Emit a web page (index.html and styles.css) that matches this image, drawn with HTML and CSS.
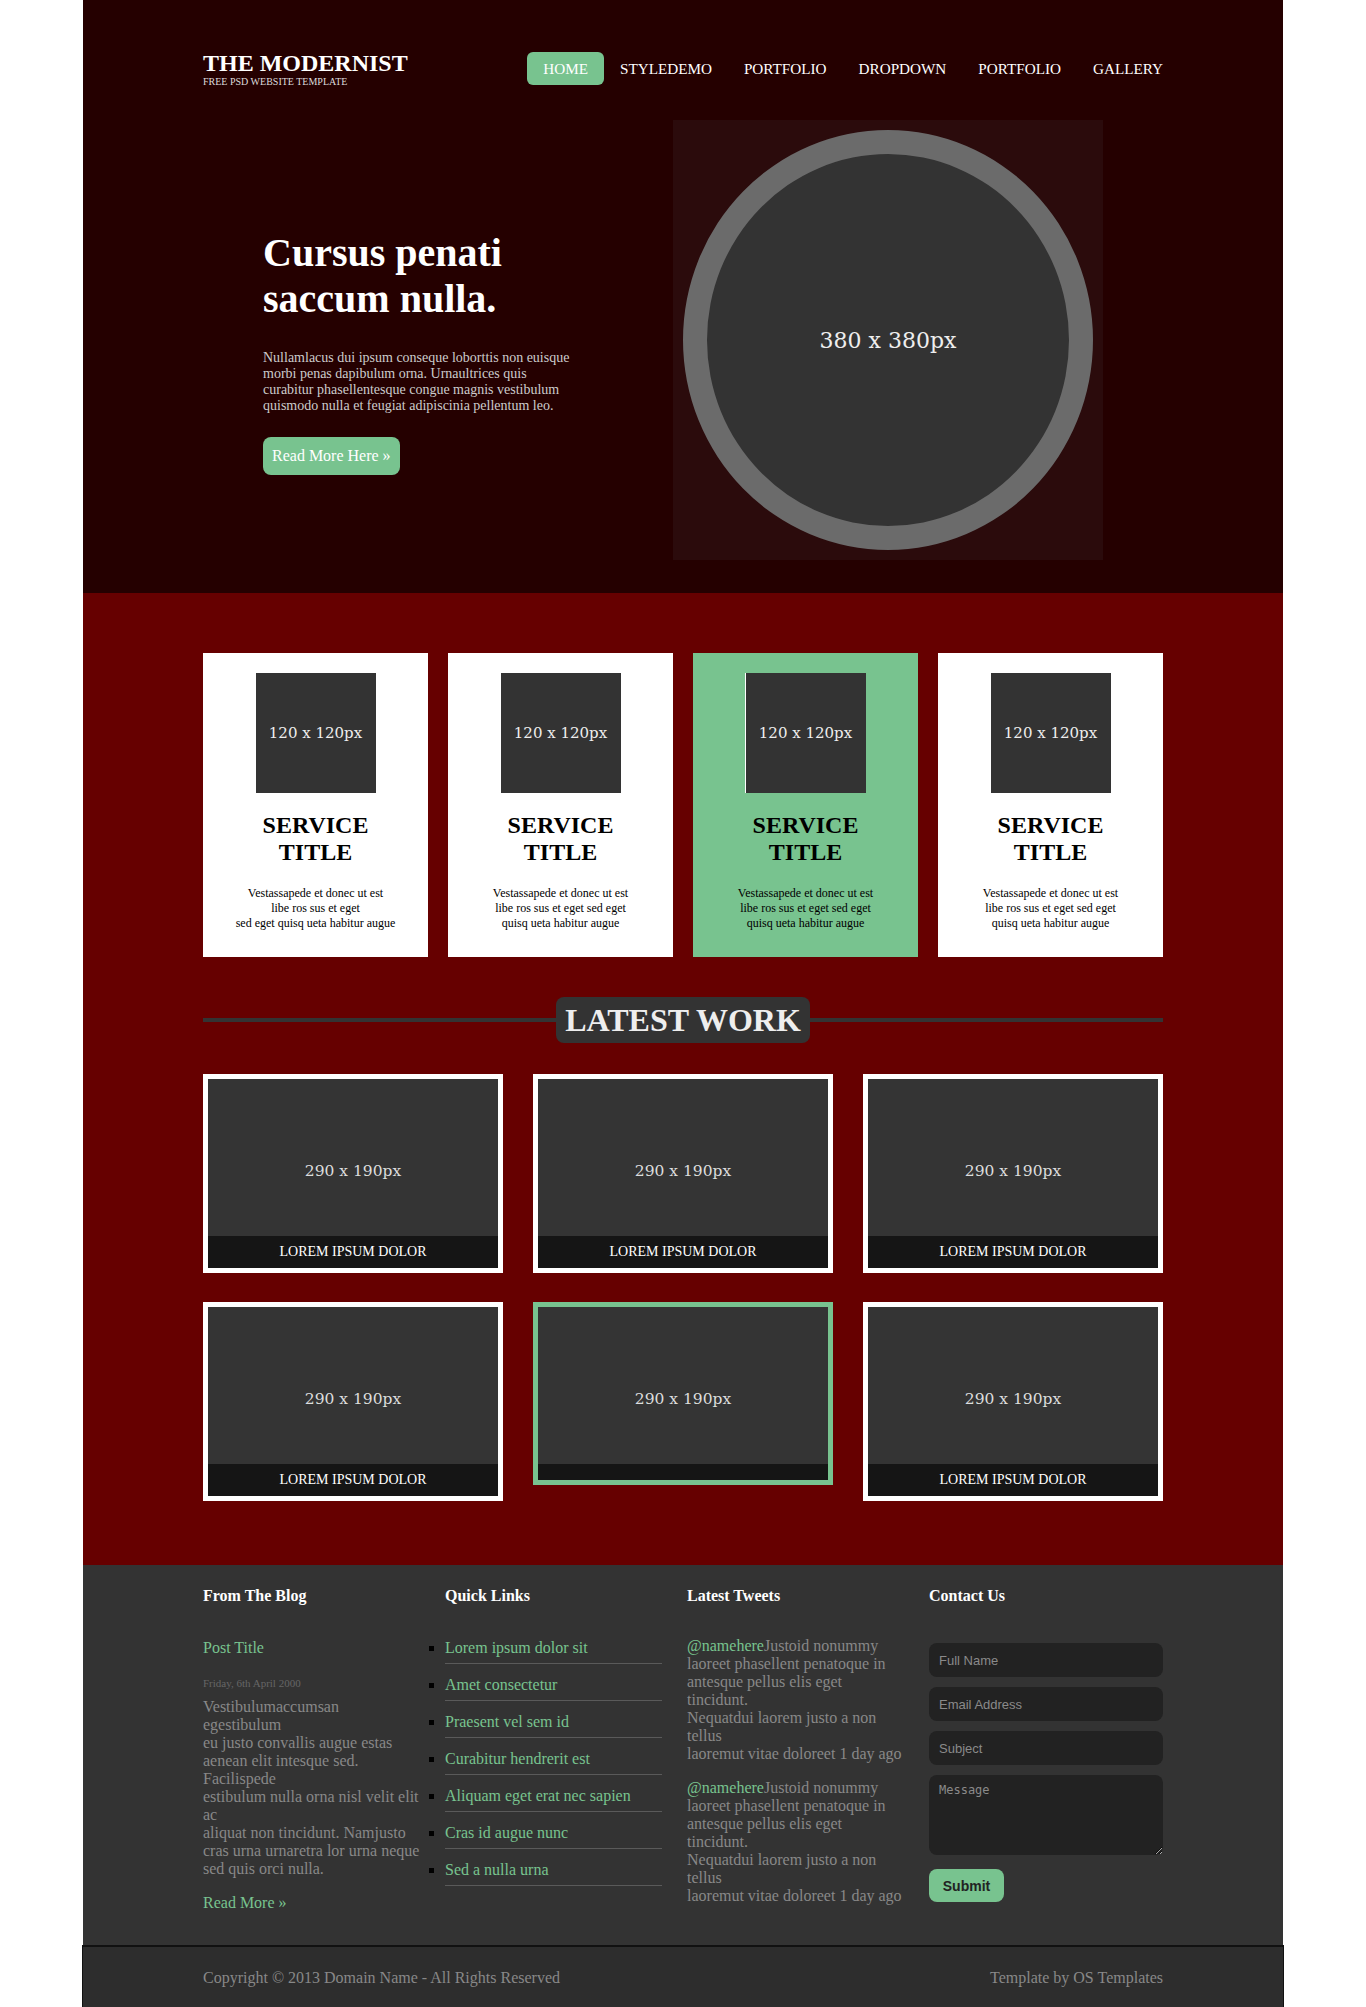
FILE: index.html
```html
<!DOCTYPE html>
<html lang="en">
<head>
<meta charset="utf-8">
<title>The Modernist</title>
<link rel="stylesheet" href="styles.css">
</head>
<body>
<div class="page">
  <header class="masthead">
    <div class="container topbar">
      <div class="brand">
        <div class="brand-name">THE MODERNIST</div>
        <div class="brand-tag">FREE PSD WEBSITE TEMPLATE</div>
      </div>
      <nav class="mainnav">
        <a class="active" href="#">HOME</a>
        <a href="#">STYLEDEMO</a>
        <a href="#">PORTFOLIO</a>
        <a href="#">DROPDOWN</a>
        <a href="#">PORTFOLIO</a>
        <a href="#">GALLERY</a>
      </nav>
    </div>
    <div class="hero">
      <div class="hero-text">
        <h1>Cursus penati<br>saccum nulla.</h1>
        <p>Nullamlacus dui ipsum conseque loborttis non euisque<br>morbi penas dapibulum orna. Urnaultrices quis<br>curabitur phasellentesque congue magnis vestibulum<br>quismodo nulla et feugiat adipiscinia pellentum leo.</p>
        <a class="btn" href="#">Read More Here &raquo;</a>
      </div>
      <div class="hero-media">
        <div class="ring"><span>380 x 380px</span></div>
      </div>
    </div>
  </header>

  <section class="works">
    <div class="container">
      <div class="services">
        <div class="service">
          <div class="ph">120 x 120px</div>
          <h3>SERVICE<br>TITLE</h3>
          <p>Vestassapede et donec ut est<br>libe ros sus et eget<br>sed eget quisq ueta habitur augue</p>
        </div>
        <div class="service">
          <div class="ph">120 x 120px</div>
          <h3>SERVICE<br>TITLE</h3>
          <p>Vestassapede et donec ut est<br>libe ros sus et eget sed eget<br>quisq ueta habitur augue</p>
        </div>
        <div class="service active">
          <div class="ph">120 x 120px</div>
          <h3>SERVICE<br>TITLE</h3>
          <p>Vestassapede et donec ut est<br>libe ros sus et eget sed eget<br>quisq ueta habitur augue</p>
        </div>
        <div class="service">
          <div class="ph">120 x 120px</div>
          <h3>SERVICE<br>TITLE</h3>
          <p>Vestassapede et donec ut est<br>libe ros sus et eget sed eget<br>quisq ueta habitur augue</p>
        </div>
      </div>

      <div class="section-title"><h2>LATEST WORK</h2></div>

      <div class="works-grid">
        <div class="work"><div class="ph">290 x 190px</div><div class="caption">LOREM IPSUM DOLOR</div></div>
        <div class="work"><div class="ph">290 x 190px</div><div class="caption">LOREM IPSUM DOLOR</div></div>
        <div class="work"><div class="ph">290 x 190px</div><div class="caption">LOREM IPSUM DOLOR</div></div>
        <div class="work"><div class="ph">290 x 190px</div><div class="caption">LOREM IPSUM DOLOR</div></div>
        <div class="work active"><div class="ph">290 x 190px</div><div class="caption"></div></div>
        <div class="work"><div class="ph">290 x 190px</div><div class="caption">LOREM IPSUM DOLOR</div></div>
      </div>
    </div>
  </section>

  <footer class="site-footer">
    <div class="container footer-grid">
      <div class="fcol">
        <h4>From The Blog</h4>
        <a class="post-title" href="#">Post Title</a>
        <div class="post-date">Friday, 6th April 2000</div>
        <p class="post-body">Vestibulumaccumsan<br>egestibulum<br>eu justo convallis augue estas<br>aenean elit intesque sed.<br>Facilispede<br>estibulum nulla orna nisl velit elit<br>ac<br>aliquat non tincidunt. Namjusto<br>cras urna urnaretra lor urna neque<br>sed quis orci nulla.</p>
        <a class="read-more" href="#">Read More &raquo;</a>
      </div>
      <div class="fcol">
        <h4>Quick Links</h4>
        <ul class="links">
          <li><a href="#">Lorem ipsum dolor sit</a></li>
          <li><a href="#">Amet consectetur</a></li>
          <li><a href="#">Praesent vel sem id</a></li>
          <li><a href="#">Curabitur hendrerit est</a></li>
          <li><a href="#">Aliquam eget erat nec sapien</a></li>
          <li><a href="#">Cras id augue nunc</a></li>
          <li><a href="#">Sed a nulla urna</a></li>
        </ul>
      </div>
      <div class="fcol">
        <h4>Latest Tweets</h4>
        <div class="tweets">
          <p class="tweet"><a href="#">@namehere</a>Justoid nonummy<br>laoreet phasellent penatoque in<br>antesque pellus elis eget<br>tincidunt.<br>Nequatdui laorem justo a non<br>tellus<br>laoremut vitae doloreet 1 day ago</p>
          <p class="tweet"><a href="#">@namehere</a>Justoid nonummy<br>laoreet phasellent penatoque in<br>antesque pellus elis eget<br>tincidunt.<br>Nequatdui laorem justo a non<br>tellus<br>laoremut vitae doloreet 1 day ago</p>
        </div>
      </div>
      <div class="fcol">
        <h4>Contact Us</h4>
        <form class="contact" action="#">
          <input type="text" placeholder="Full Name">
          <input type="text" placeholder="Email Address">
          <input type="text" placeholder="Subject">
          <textarea placeholder="Message"></textarea>
          <button type="button">Submit</button>
        </form>
      </div>
    </div>
  </footer>

  <div class="copyright">
    <div class="container copyright-inner">
      <span>Copyright &copy; 2013 Domain Name - All Rights Reserved</span>
      <span>Template by OS Templates</span>
    </div>
  </div>
</div>
</body>
</html>
```

FILE: styles.css
```css
body {
  margin: 0;
  background: #fff;
  font-family: "Liberation Serif", "Times New Roman", serif;
}

.page {
  width: 1200px;
  margin: 0 auto;
}

.container {
  width: 960px;
  margin: 0 auto;
}

/* ---------- header ---------- */
.masthead {
  background: #250000;
  padding: 50px 0 33px;
}

.topbar {
  display: flex;
  justify-content: space-between;
  align-items: flex-start;
}

.brand-name {
  color: #fff;
  font-weight: bold;
  font-size: 24px;
  line-height: 26px;
}

.brand-tag {
  color: #ddd;
  font-size: 10px;
  line-height: 12px;
}

.mainnav {
  display: flex;
  margin-top: 2px;
  margin-right: -16px;
}

.mainnav a {
  color: #fff;
  text-decoration: none;
  font-size: 15.2px;
  line-height: 33px;
  padding: 0 16px;
  border-radius: 6px;
}

.mainnav a.active {
  background: #78c38f;
}

.hero {
  width: 840px;
  margin: 32px auto 0;
  display: flex;
  justify-content: space-between;
}

.hero-text {
  padding-top: 110px;
  display: flex;
  flex-direction: column;
  align-items: flex-start;
}

.hero-text h1 {
  margin: 0;
  color: #fff;
  font-size: 40px;
  line-height: 46px;
  font-weight: bold;
}

.hero-text p {
  margin: 28px 0 0;
  color: #ccc;
  font-size: 14px;
  line-height: 16px;
}

.btn {
  margin-top: 23px;
  background: #78c38f;
  color: #fff;
  font-size: 16px;
  line-height: 38px;
  padding: 0 9px;
  border-radius: 8px;
  text-decoration: none;
}

.hero-media {
  width: 430px;
  height: 440px;
  background: #2b0b0c;
  display: flex;
  align-items: center;
  justify-content: center;
}

.ring {
  box-sizing: border-box;
  width: 410px;
  height: 420px;
  border-radius: 50%;
  border: 24px solid #6b6b6b;
  background: #333;
  display: flex;
  align-items: center;
  justify-content: center;
  color: #eee;
  font-family: "DejaVu Serif", serif;
  font-size: 22px;
}

/* ---------- red section ---------- */
.works {
  background: #660000;
  padding: 60px 0 64px;
}

.ph {
  background: #333;
  color: #eee;
  font-family: "DejaVu Serif", serif;
  display: flex;
  align-items: center;
  justify-content: center;
}

.services {
  display: grid;
  grid-template-columns: repeat(4, 1fr);
  gap: 20px;
}

.service {
  background: #fff;
  padding: 20px 0 26px;
  text-align: center;
}

.service.active {
  background: #78c38f;
}

.service .ph {
  width: 120px;
  height: 120px;
  margin: 0 auto;
  font-size: 15px;
}

.service.active .ph {
  box-shadow: -1px 0 0 #fff;
}

.service h3 {
  margin: 19px 0 0;
  color: #000;
  font-size: 24px;
  line-height: 27px;
}

.service p {
  margin: 20px 0 0;
  color: #000;
  font-size: 12px;
  line-height: 15px;
}

.section-title {
  display: flex;
  align-items: center;
  margin: 40px 0 31px;
}

.section-title::before,
.section-title::after {
  content: "";
  flex: 1;
  height: 4px;
  background: #333;
}

.section-title h2 {
  margin: 0;
  background: #333;
  color: #eee;
  font-size: 32px;
  line-height: 46px;
  padding: 0 9px;
  border-radius: 8px;
}

.works-grid {
  display: grid;
  grid-template-columns: repeat(3, 300px);
  column-gap: 30px;
  row-gap: 29px;
  align-items: start;
}

.work {
  border: 5px solid #fff;
  height: 189px;
  position: relative;
  overflow: hidden;
  background: #343434;
}

.work.active {
  border-color: #78c38f;
  height: 173px;
}

.work .ph {
  height: 184px;
  background: transparent;
  color: #ddd;
  font-size: 15.5px;
}

.work .caption {
  position: absolute;
  left: 0;
  right: 0;
  bottom: 0;
  height: 32px;
  line-height: 32px;
  background: #151515;
  color: #fff;
  font-size: 14px;
  text-align: center;
}

.work.active .caption {
  height: 16px;
}

/* ---------- footer ---------- */
.site-footer {
  background: #333;
  padding: 22px 0 33px;
}

.footer-grid {
  display: grid;
  grid-template-columns: 217px 217px 217px 1fr;
  column-gap: 25px;
  align-items: start;
}

.footer-grid h4 {
  margin: 0 0 34px;
  color: #fff;
  font-size: 16px;
  line-height: 18px;
}

.fcol a {
  color: #78c38f;
  text-decoration: none;
}

.post-title {
  display: block;
  font-size: 16px;
  line-height: 18px;
}

.post-date {
  margin-top: 20px;
  color: #666;
  font-size: 11px;
  line-height: 13px;
}

.post-body {
  margin: 8px 0 0;
  color: #888;
  font-size: 16px;
  line-height: 18px;
}

.read-more {
  display: block;
  margin-top: 16px;
  font-size: 16px;
  line-height: 18px;
}

.links {
  list-style: square;
  margin: 0;
  padding: 0;
  color: #000;
}

.links li {
  font-size: 16px;
  line-height: 18px;
  padding-bottom: 6px;
  margin-bottom: 12px;
  border-bottom: 1px solid #5a5a5a;
}

.tweets {
  margin-top: -2px;
}

.tweet {
  margin: 0;
  color: #888;
  font-size: 16px;
  line-height: 18px;
}

.tweet + .tweet {
  margin-top: 16px;
}

.contact {
  display: flex;
  flex-direction: column;
  align-items: flex-start;
  padding-top: 4px;
}

.contact input,
.contact textarea {
  box-sizing: border-box;
  display: block;
  width: 100%;
  height: 34px;
  margin: 0 0 10px;
  padding: 0 10px;
  border: 0;
  border-radius: 8px;
  background: #222;
  color: #ccc;
  font: 13px "Liberation Sans", Arial, sans-serif;
}

.contact textarea {
  height: 80px;
  padding: 8px 10px;
  font: 12px "DejaVu Sans Mono", monospace;
  resize: vertical;
}

.contact input::placeholder,
.contact textarea::placeholder {
  color: #8a8a8a;
}

.contact button {
  margin-top: 4px;
  width: 75px;
  height: 33px;
  border: 0;
  border-radius: 8px;
  background: #78c38f;
  color: #222;
  font: bold 14px "Liberation Sans", Arial, sans-serif;
}

.copyright {
  background: #2d2d2d;
  border-top: 2px solid #111;
  border-left: 1px solid #111;
  border-right: 1px solid #111;
  margin: 0 -1px;
  height: 63px;
}

.copyright-inner {
  display: flex;
  justify-content: space-between;
  color: #888;
  font-size: 16px;
  padding-top: 3px;
  line-height: 56px;
}
```
